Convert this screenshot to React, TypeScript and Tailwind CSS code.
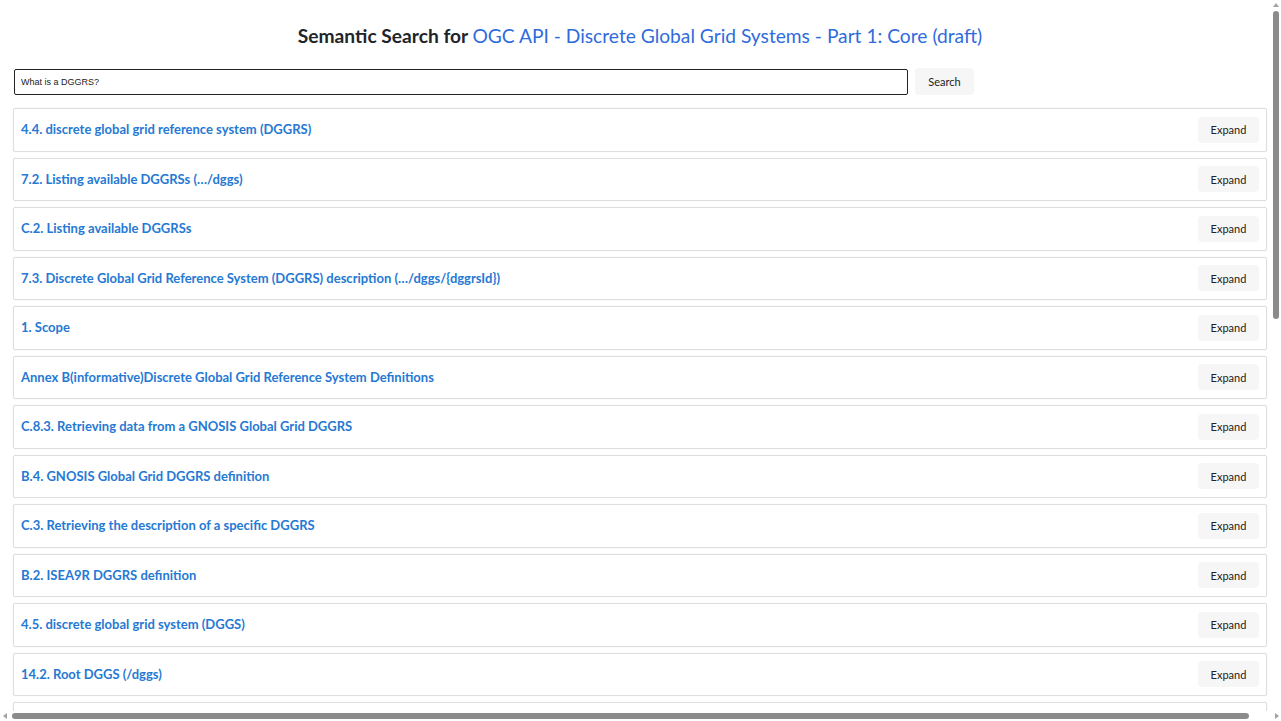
import React, { useState } from 'react';

const RESULTS: string[] = [
  '4.4. discrete global grid reference system (DGGRS)',
  '7.2. Listing available DGGRSs (…/dggs)',
  'C.2. Listing available DGGRSs',
  '7.3. Discrete Global Grid Reference System (DGGRS) description (…/dggs/{dggrsId})',
  '1. Scope',
  'Annex B(informative)Discrete Global Grid Reference System Definitions',
  'C.8.3. Retrieving data from a GNOSIS Global Grid DGGRS',
  'B.4. GNOSIS Global Grid DGGRS definition',
  'C.3. Retrieving the description of a specific DGGRS',
  'B.2. ISEA9R DGGRS definition',
  '4.5. discrete global grid system (DGGS)',
  '14.2. Root DGGS (/dggs)',
  '4.6. discrete global grid (DGG)',
  '7.1. Overview',
  'B.3. ISEA3H DGGRS definition',
  '5.2. Identifiers',
  'C.1. Overview',
  '4.7. zone',
  '8.2. Retrieving zone information (…/dggs/{dggrsId}/zones/{zoneId})',
  '2. Conformance',
  'B.1. Overview',
  '6.1. Overview of the API',
  '4.8. zone identifier (ZoneID)',
  'C.4. Retrieving zone information',
  '10.1. Zone query',
  'Annex A(normative)Conformance Class Abstract Test Suite',
  '3. References',
  '9.1. Data retrieval',
  'C.8.1. Retrieving data from an ISEA9R DGGRS',
  '14.1. Collection DGGS',
];

function ResultCard({ title }: { title: string }) {
  const [open, setOpen] = useState(false);
  return (
    <div className="bg-white border border-[#dedede] rounded-[2px] shadow-[0_0_2px_rgba(0,0,0,0.06)] px-[7px] py-[7.75px]">
      <div className="flex items-center justify-between">
        <span className="text-[13px] font-bold text-[#2679d3] leading-none">{title}</span>
        <button
          onClick={() => setOpen(!open)}
          className="h-[26px] w-[61px] rounded-[4px] bg-[#f6f6f6] text-[11px] text-[#222] leading-none cursor-pointer"
        >
          {open ? 'Collapse' : 'Expand'}
        </button>
      </div>
      {open && <p className="mt-2 text-[12px] text-[#444]">…</p>}
    </div>
  );
}

// browser-style scrollbars (the page overflows both ways)
function Scrollbars() {
  return (
    <>
      <div className="fixed top-0 right-0 w-[10px] h-[711px] bg-white flex flex-col items-center">
        <span className="mt-[3px] w-0 h-0 border-x-[3px] border-x-transparent border-b-[4px] border-b-[#a3a3a3]" />
        <div className="mt-[4px] w-[6px] h-[308px] rounded-full bg-[#8b8b8b]" />
      </div>
      <div className="fixed bottom-0 left-0 w-full h-[10px] bg-white flex items-center">
        <span className="ml-[3px] w-0 h-0 border-y-[3px] border-y-transparent border-r-[4px] border-r-[#a3a3a3]" />
        <div className="ml-[5px] w-[1237px] h-[6px] rounded-full bg-[#8b8b8b]" />
        <span className="ml-[26px] w-0 h-0 border-y-[3px] border-y-transparent border-l-[4px] border-l-[#a3a3a3]" />
      </div>
    </>
  );
}

export default function App() {
  const [query, setQuery] = useState('What is a DGGRS?');

  return (
    <div className="w-[1292px] pl-[13px] pr-[25px] pb-[10px] bg-white font-['Lato','Noto_Sans',sans-serif] text-[#222]">
      <h1 className="pt-[23px] pb-[19px] text-center text-[19.2px] leading-[26px] text-[#212529]">
        <span className="font-bold">Semantic Search for </span>
        <a href="#" className="text-[#2f6bdc]">OGC API - Discrete Global Grid Systems - Part 1: Core (draft)</a>
      </h1>

      <div className="flex items-center gap-[7px] pl-px">
        <input
          value={query}
          onChange={(e) => setQuery(e.target.value)}
          className="w-[894px] h-[26px] border border-[#222] rounded-[2px] px-[6px] text-[9px] text-[#222] font-['Liberation_Sans',Arial,sans-serif] outline-none"
        />
        <button className="h-[27px] w-[59px] rounded-[4px] bg-[#f6f6f6] text-[11px] text-[#222] leading-none">
          Search
        </button>
      </div>

      <div className="mt-[13px] flex flex-col gap-[6px]">
        {RESULTS.map((t) => (
          <ResultCard key={t} title={t} />
        ))}
      </div>
      <Scrollbars />
    </div>
  );
}
